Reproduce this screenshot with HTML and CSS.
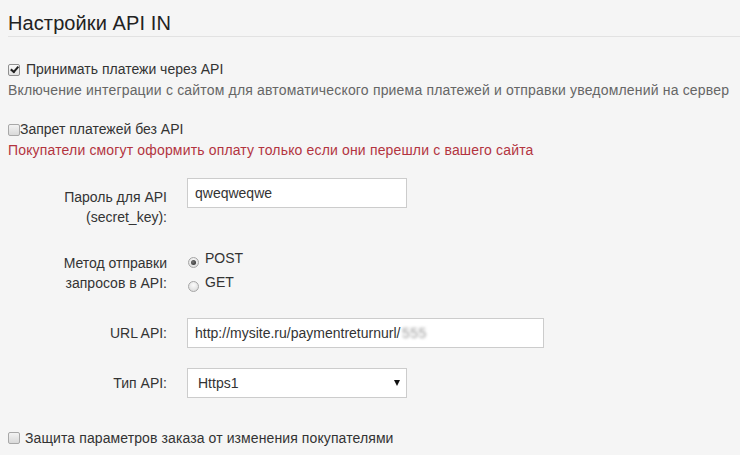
FILE: index.html
```html
<!DOCTYPE html>
<html lang="ru">
<head>
<meta charset="utf-8">
<title>Настройки API IN</title>
<link rel="stylesheet" href="styles.css">
</head>
<body>
<div class="page">
  <h1 class="title">Настройки API IN</h1>

  <div class="opt opt-first">
    <label class="check"><input type="checkbox" class="cb" checked><span>Принимать платежи через API</span></label>
    <p class="hint">Включение интеграции с сайтом для автоматического приема платежей и отправки уведомлений на сервер</p>
  </div>

  <div class="opt opt-second">
    <label class="check tight"><input type="checkbox" class="cb"><span>Запрет платежей без API</span></label>
    <p class="hint warn">Покупатели смогут оформить оплату только если они перешли с вашего сайта</p>
  </div>

  <div class="form">
    <div class="row row-pass">
      <label class="lbl lbl-pass" for="pass">Пароль для API<br>(secret_key):</label>
      <input id="pass" class="field field-short" type="text" value="qweqweqwe">
    </div>
    <div class="row row-method">
      <div class="lbl lbl-method">Метод отправки<br>запросов в API:</div>
      <div class="radios">
        <label class="radio"><input type="radio" name="method" class="rb" checked><span>POST</span></label>
        <label class="radio"><input type="radio" name="method" class="rb"><span>GET</span></label>
      </div>
    </div>
    <div class="row row-url">
      <label class="lbl lbl-line" for="url">URL API:</label>
      <div class="field-wrap">
        <input id="url" class="field field-long" type="text" value="http://mysite.ru/paymentreturnurl/">
        <span class="blurred">555</span>
      </div>
    </div>
    <div class="row row-type">
      <label class="lbl lbl-line" for="type">Тип API:</label>
      <div class="select-wrap">
        <select id="type" class="select"><option>Https1</option></select>
      </div>
    </div>
  </div>

  <label class="check bottom"><input type="checkbox" class="cb"><span>Защита параметров заказа от изменения покупателями</span></label>
</div>
</body>
</html>
```

FILE: styles.css
```css
html, body {
  margin: 0;
  padding: 0;
  background: #f5f5f5;
}
body {
  font-family: "Liberation Sans", Arial, sans-serif;
  font-size: 14px;
  color: #333;
}
.page {
  padding-left: 8px;
  overflow: hidden;
  height: 455px;
}
.title {
  margin: 12px 0 0;
  padding-bottom: 2px;
  font-size: 20px;
  line-height: 22px;
  font-weight: normal;
  color: #222;
  letter-spacing: 0.1px;
  border-bottom: 1px solid #e2e2e2;
}
.opt { margin: 0; }
.opt-first { margin-top: 22px; }
.opt-second { margin-top: 18px; }
.check {
  display: flex;
  align-items: flex-start;
  line-height: 21px;
  color: #333;
}
.check .cb { margin: 5px 6px 0 0; }
.check.tight .cb { margin-right: 0; }
.check.bottom { margin-top: 30px; letter-spacing: 0.1px; }
.check.bottom .cb { margin-top: 4px; margin-right: 5px; }
.hint {
  margin: 0;
  line-height: 21px;
  color: #666;
  letter-spacing: 0.18px;
}
.hint.warn { color: #b3343f; letter-spacing: 0.16px; }

.cb {
  appearance: none;
  -webkit-appearance: none;
  box-sizing: border-box;
  width: 12px;
  height: 12px;
  flex: none;
  border: 1px solid #a8a8a8;
  border-radius: 2px;
  background: linear-gradient(#f3f3f3, #d9d9d9);
  position: relative;
}
.cb:checked {
  border-color: #8f8f8f;
  background: linear-gradient(#fafafa, #e2e2e2);
}
.cb:checked::after {
  content: "";
  position: absolute;
  left: 3px;
  top: 0px;
  width: 3px;
  height: 6px;
  border: solid #222;
  border-width: 0 2px 2px 0;
  transform: rotate(40deg);
  transform-origin: 60% 50%;
}

.form { margin-top: 17px; }
.row {
  display: grid;
  grid-template-columns: 159px auto;
  column-gap: 20px;
  align-items: start;
  justify-content: start;
}
.row-method { margin-top: 19px; }
.row-url { margin-top: 24px; }
.row-type { margin-top: 20px; }
.lbl {
  text-align: right;
  line-height: 20px;
  color: #333;
}
.lbl-pass { padding-top: 9px; }
.lbl-method { padding-top: 7px; }
.lbl-line { padding-top: 5px; }

.field {
  box-sizing: border-box;
  height: 30px;
  border: 1px solid #cccccc;
  background: #fff;
  padding: 0 7px;
  font-family: "Liberation Sans", Arial, sans-serif;
  font-size: 14px;
  color: #333;
  margin: 0;
  outline: none;
}
.field-short { width: 220px; }
.field-long { width: 357px; }
.field-wrap {
  position: relative;
  width: 357px;
  height: 30px;
}
.blurred {
  position: absolute;
  left: 215px;
  top: 6px;
  line-height: 18px;
  font-size: 14px;
  color: #999;
  filter: blur(1.4px);
  letter-spacing: 0.5px;
}

.radios { display: flex; flex-direction: column; }
.radio {
  display: flex;
  align-items: flex-start;
  line-height: 24px;
  color: #333;
}
.rb {
  appearance: none;
  -webkit-appearance: none;
  box-sizing: border-box;
  width: 11px;
  height: 11px;
  flex: none;
  margin: 11px 6px 0 1px;
  border: 1px solid #a6a6a6;
  border-radius: 50%;
  background: radial-gradient(circle at 50% 35%, #fbfbfb, #d6d6d6);
  position: relative;
}
.rb:checked::after {
  content: "";
  position: absolute;
  left: 2px;
  top: 2px;
  width: 5px;
  height: 5px;
  border-radius: 50%;
  background: radial-gradient(circle at 40% 40%, #777, #222);
}

.select-wrap {
  position: relative;
  width: 220px;
  height: 30px;
}
.select {
  appearance: none;
  -webkit-appearance: none;
  box-sizing: border-box;
  width: 220px;
  height: 30px;
  border: 1px solid #cccccc;
  border-radius: 0;
  background: #fff;
  padding: 0 10px;
  font-family: "Liberation Sans", Arial, sans-serif;
  font-size: 14px;
  color: #333;
  margin: 0;
  outline: none;
}
.select-wrap::after {
  content: "";
  position: absolute;
  left: 207px;
  top: 12px;
  width: 0;
  height: 0;
  border-left: 3.5px solid transparent;
  border-right: 3.5px solid transparent;
  border-top: 6px solid #111;
  pointer-events: none;
}
```
